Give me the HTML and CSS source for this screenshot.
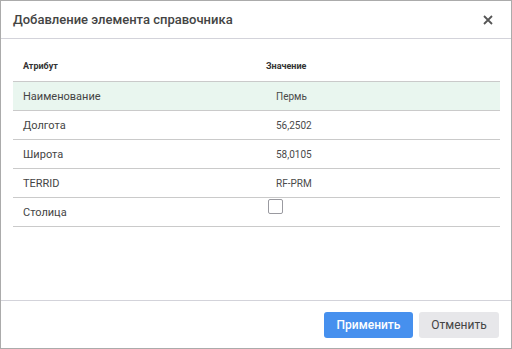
FILE: index.html
```html
<!DOCTYPE html>
<html lang="ru">
<head>
<meta charset="utf-8">
<link rel="stylesheet" href="styles.css">
</head>
<body>
<div class="dialog">
  <div class="title">
    <span class="title-text">Добавление элемента справочника</span>
    <svg class="close" width="10" height="10" viewBox="0 0 10 10"><path d="M1 1L9 9M9 1L1 9" stroke="#555" stroke-width="1.8" fill="none"/></svg>
  </div>
  <div class="content">
    <div class="table">
      <div class="row head">
        <div class="c1">Атрибут</div>
        <div class="c2">Значение</div>
      </div>
      <div class="row sel">
        <div class="c1">Наименование</div>
        <div class="c2 val">Пермь</div>
      </div>
      <div class="row">
        <div class="c1">Долгота</div>
        <div class="c2 val">56,2502</div>
      </div>
      <div class="row">
        <div class="c1">Широта</div>
        <div class="c2 val">58,0105</div>
      </div>
      <div class="row">
        <div class="c1">TERRID</div>
        <div class="c2 val">RF-PRM</div>
      </div>
      <div class="row">
        <div class="c1">Столица</div>
        <div class="c2 chk"><span class="checkbox"></span></div>
      </div>
    </div>
  </div>
  <div class="footer">
    <button class="btn primary">Применить</button>
    <button class="btn secondary">Отменить</button>
  </div>
</div>
</body>
</html>
```
FILE: styles.css
```css
* { box-sizing: border-box; }
html, body { margin: 0; padding: 0; }
body { font-family: Roboto, "Noto Sans", sans-serif; background: #fff; }
.dialog {
  width: 512px; height: 349px;
  border: 1px solid #ababab;
  display: flex; flex-direction: column;
  background: #fff;
}
.title {
  height: 38px;
  border-bottom: 1px solid #d3d3da;
  display: flex; align-items: center; justify-content: space-between;
  padding: 0 18px 0 12px;
}
.title-text { font-size: 13px; font-weight: 500; color: #444; }
.close { display: block; margin-top: 1px; width: 10px; height: 10px; }
.content { flex: 1; padding: 0 11px 0 12px; }
.table { display: flex; flex-direction: column; }
.row {
  display: flex; height: 29px; align-items: center;
  border-bottom: 1px solid #cacaca;
  font-size: 11px; color: #444;
}
.row.head {
  height: 43px; padding-top: 12px;
  font-size: 9px; font-weight: 700; color: #333;
}
.row.sel { background: #e9f6ef; }
.c1 { width: 243px; padding-left: 10px; }
.c2 { flex: 1; padding-left: 10px; }
.val { padding-left: 20px; font-size: 10px; color: #4a4a4a; }
.chk { align-self: flex-start; padding-top: 1px; padding-left: 12px; }
.checkbox {
  display: block; width: 15px; height: 15px;
  border: 1px solid #9a9aa0; border-radius: 2px; background: #fff;
}
.footer {
  height: 48px;
  border-top: 1px solid #d3d3da;
  display: flex; justify-content: flex-end; align-items: flex-start;
  gap: 6px; padding: 11px 12px 0 0;
}
.btn {
  height: 26px; border: none; border-radius: 3px;
  font-family: Roboto, "Noto Sans", sans-serif; font-size: 12px;
  padding: 0; cursor: pointer;
}
.primary { width: 89px; background: #4690ee; color: #fff; font-weight: 500; }
.secondary { width: 80px; background: #e7e7ea; color: #444; }
```
